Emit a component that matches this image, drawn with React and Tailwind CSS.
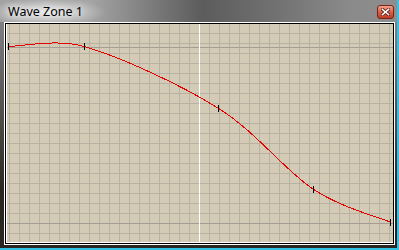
import React from 'react';

const vLines = Array.from({ length: 39 }, (_, i) => 2 + i * 10);
const hLines = Array.from({ length: 21 }, (_, i) => 9 + i * 10);

const points = [
  [1, 22],
  [77, 22],
  [211, 84],
  [306, 165],
  [383, 198],
];

const curve =
  'M1 22.5 C13.7 22.5 51 14.5 77 22.5 ' +
  'C112 32.3 172.8 60.2 211 84 ' +
  'C249.2 107.8 277.3 146 306 165 ' +
  'C334.7 184 370.2 192.5 383 198';

function WaveGraph() {
  return (
    <svg width="386" height="218" className="block" shapeRendering="crispEdges">
      <rect width="386" height="218" fill="#d4cbb7" />
      {vLines.map((x) => (
        <line key={'v' + x} x1={x + 0.5} y1="0" x2={x + 0.5} y2="218" stroke="#b9b1a1" />
      ))}
      {hLines.map((y) => (
        <line key={'h' + y} x1="0" y1={y + 0.5} x2="386" y2={y + 0.5} stroke="#b9b1a1" />
      ))}
      {/* level guides */}
      <line x1="0" y1="23.5" x2="386" y2="23.5" stroke="#a39d95" />
      <line x1="0" y1="199.5" x2="386" y2="199.5" stroke="#a39d95" />
      {/* playhead */}
      <line x1="192.5" y1="0" x2="192.5" y2="218" stroke="#ffffff" />
      <path d={curve} fill="none" stroke="#e60000" strokeWidth="1" />
      {points.map(([x, y]) => (
        <line key={'p' + x} x1={x + 0.5} y1={y - 3} x2={x + 0.5} y2={y + 4} stroke="#000000" />
      ))}
    </svg>
  );
}

function CloseButton() {
  return (
    <div className="w-[17px] h-[14px] mt-[5px] rounded-[3px] border border-[#7a2418] bg-[linear-gradient(to_bottom,#f0a090,#d86048_50%,#c03c24)] flex items-center justify-center">
      <svg width="9" height="8" viewBox="0 0 9 8">
        <path d="M1.5 1.5 L7.5 6.5 M7.5 1.5 L1.5 6.5" stroke="#5a1a10" strokeWidth="3" strokeLinecap="square" />
        <path d="M1.5 1.5 L7.5 6.5 M7.5 1.5 L1.5 6.5" stroke="#ffffff" strokeWidth="1.6" strokeLinecap="square" />
      </svg>
    </div>
  );
}

export default function App() {
  return (
    <div className="w-[399px] h-[250px] bg-[#2fc2e3]">
      <div className="w-[397px] h-[248px] flex flex-col bg-[linear-gradient(to_bottom,#8c8c8c_0px,#6c6c6c_60px,#2c2622_190px)]">
        {/* Title bar */}
        <div className="h-[22px] flex items-start justify-between pl-2 pr-[3px] bg-[radial-gradient(ellipse_60px_14px_at_46px_12px,rgba(235,235,235,0.9),rgba(235,235,235,0)),linear-gradient(to_right,#a2a2a2_0%,#a6a6a6_22%,#7c7c7c_38%,#5c5c5c_51%,#727272_70%,#8a8a8a_88%,#8e8e8e_100%)]">
          <span className="mt-[4px] text-[12.5px] leading-[15px] text-black font-['Noto_Sans',sans-serif] [text-shadow:0_0_6px_#fff,0_0_10px_#fff]">
            Wave Zone 1
          </span>
          <CloseButton />
        </div>

        {/* Graph frame */}
        <div className="ml-1 mr-[2px] border border-white">
          <div className="border border-black">
            <div className="border-l border-b border-white">
              <WaveGraph />
            </div>
          </div>
        </div>
      </div>
    </div>
  );
}
